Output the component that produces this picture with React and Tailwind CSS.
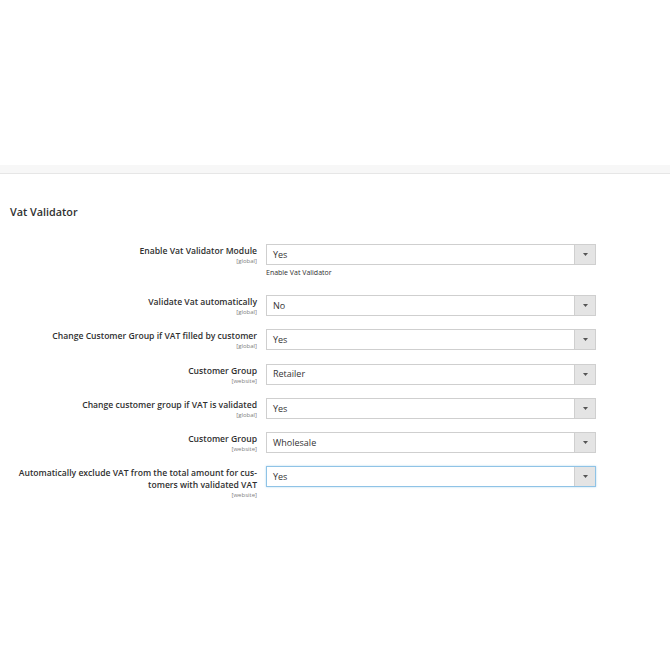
const ROWS = [
  { label: ['Enable Vat Validator Module'], scope: 'global', value: 'Yes', note: 'Enable Vat Validator' },
  { label: ['Validate Vat automatically'], scope: 'global', value: 'No' },
  { label: ['Change Customer Group if VAT filled by customer'], scope: 'global', value: 'Yes' },
  { label: ['Customer Group'], scope: 'website', value: 'Retailer' },
  { label: ['Change customer group if VAT is validated'], scope: 'global', value: 'Yes' },
  { label: ['Customer Group'], scope: 'website', value: 'Wholesale' },
  {
    label: ['Automatically exclude VAT from the total amount for cus-', 'tomers with validated VAT'],
    scope: 'website',
    value: 'Yes',
    focused: true,
  },
];

function Select({ value, focused }) {
  return (
    <div
      className={
        'flex h-[21px] w-[330px] items-stretch border bg-white ' +
        (focused ? 'border-[#8fc3e6] shadow-[0_0_2px_#b5d8ef]' : 'border-[#cfcfcf]')
      }
    >
      <div className="flex flex-1 items-center pl-[6px] text-[9px] text-[#333]">{value}</div>
      <div className="flex w-[21px] items-center justify-center border-l border-[#cfcfcf] bg-[#e4e4e4]">
        <svg width="5" height="3" viewBox="0 0 5 3">
          <path d="M0 0h5L2.5 3z" fill="#555" />
        </svg>
      </div>
    </div>
  );
}

export default function App() {
  return (
    <div className="min-h-[670px] w-[670px] bg-white" style={{ fontFamily: '"Open Sans", sans-serif' }}>
      <div className="h-[165px]" />
      <div className="h-[8px] bg-[#f7f7f7]" />
      <div className="h-px bg-[#e6e6e6]" />

      <h2 className="mt-[31px] pl-[10px] text-[10.8px] font-semibold leading-[14px] text-[#303030]">Vat Validator</h2>

      <div className="mt-[25px] flex flex-col gap-[13.2px]">
        {ROWS.map((row, i) => (
          <div key={i} className="flex items-start">
            <div className="w-[257px] text-right">
              <div className="pt-[1px] text-[8.6px] font-semibold leading-[12px] text-[#303030]">
                {row.label.map((l, j) => (
                  <div key={j}>{l}</div>
                ))}
              </div>
              <div className="text-[6px] leading-[8px] text-[#808080]">[{row.scope}]</div>
            </div>
            <div className="ml-[9px]">
              <Select value={row.value} focused={row.focused} />
              {row.note && (
                <div className="mb-[4px] mt-[3px] text-[7px] leading-[10px] text-[#303030]">{row.note}</div>
              )}
            </div>
          </div>
        ))}
      </div>
    </div>
  );
}
